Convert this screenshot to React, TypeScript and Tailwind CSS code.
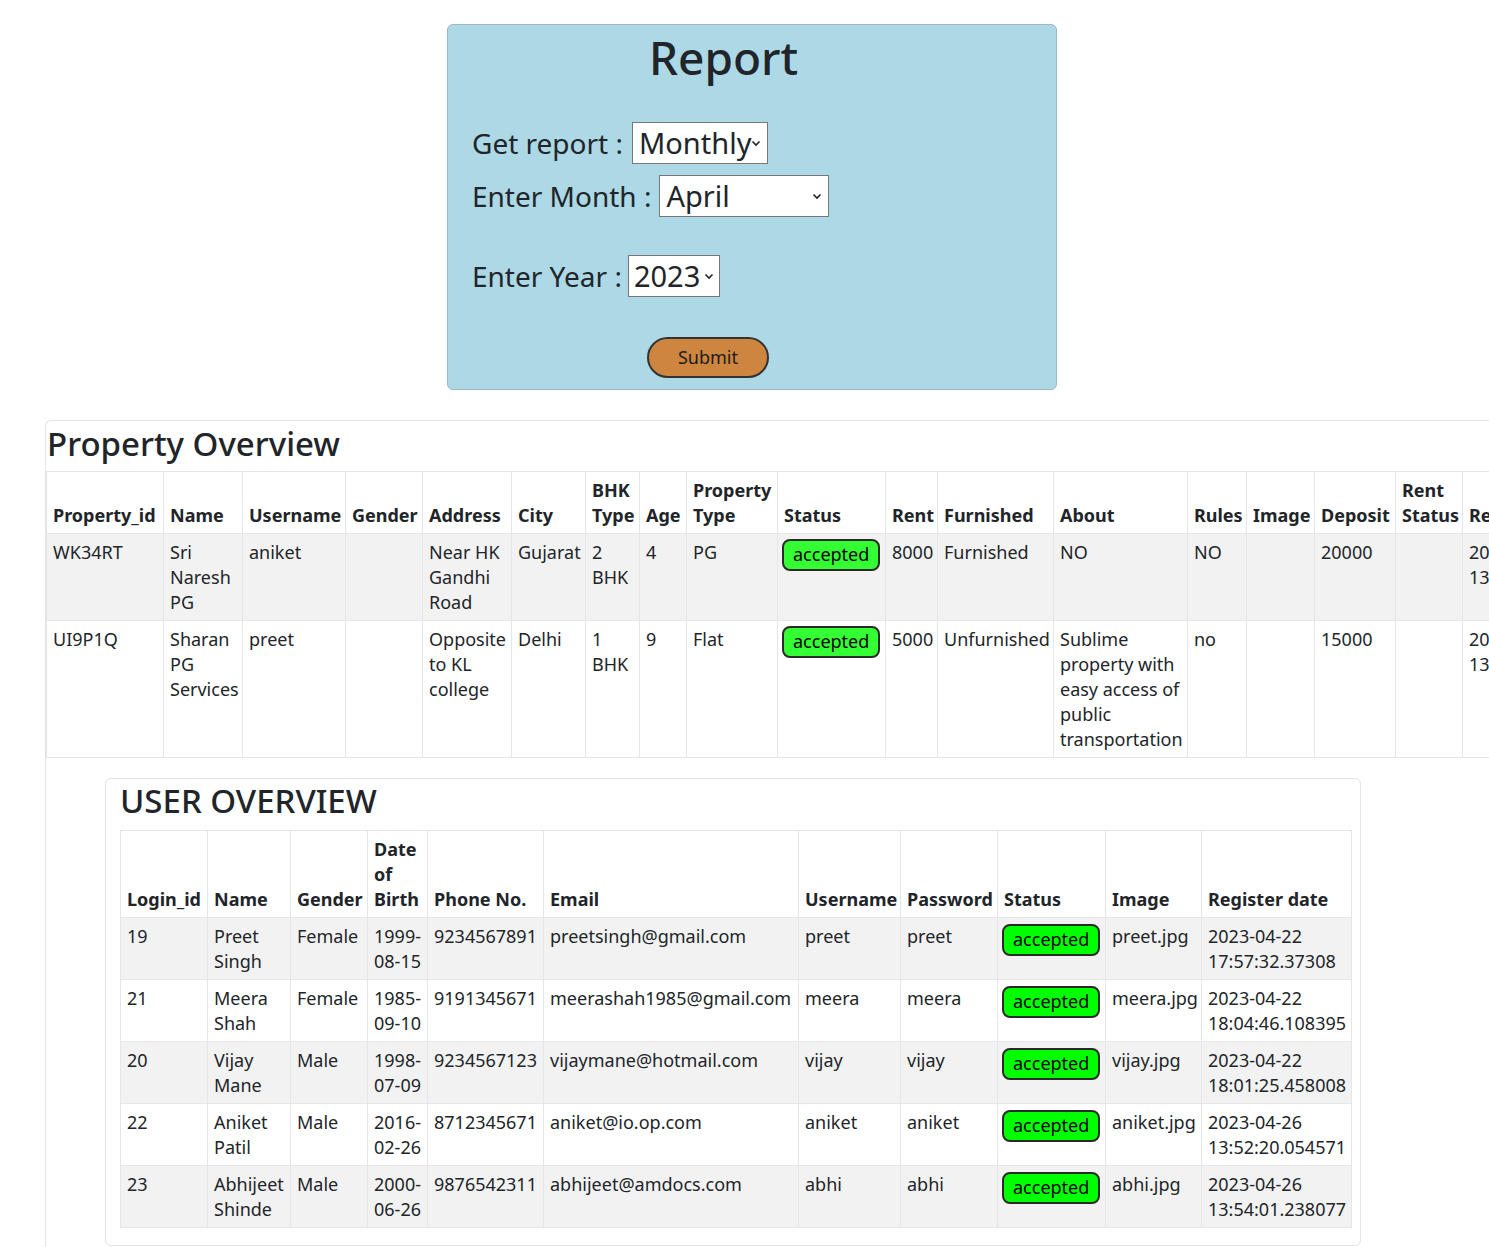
import React from "react";

const propHead = [
  { label: "Property_id", w: "w-[117px]" },
  { label: "Name", w: "w-[79px]" },
  { label: "Username", w: "w-[103px]" },
  { label: "Gender", w: "w-[77px]" },
  { label: "Address", w: "w-[89px]" },
  { label: "City", w: "w-[74px]" },
  { label: "BHK Type", w: "w-[54px]" },
  { label: "Age", w: "w-[47px]" },
  { label: "Property Type", w: "w-[91px]" },
  { label: "Status", w: "w-[108px]" },
  { label: "Rent", w: "w-[52px]" },
  { label: "Furnished", w: "w-[116px]" },
  { label: "About", w: "w-[134px]" },
  { label: "Rules", w: "w-[59px]" },
  { label: "Image", w: "w-[68px]" },
  { label: "Deposit", w: "w-[81px]" },
  { label: "Rent Status", w: "w-[67px]" },
  { label: "Register date", w: "w-[150px]" },
];

const properties = [
  ["WK34RT", "Sri Naresh PG", "aniket", "", "Near HK Gandhi Road", "Gujarat", "2 BHK", "4", "PG", "accepted", "8000", "Furnished", "NO", "NO", "", "20000", "", "2023-04-26 13:52:20.054571"],
  ["UI9P1Q", "Sharan PG Services", "preet", "", "Opposite to KL college", "Delhi", "1 BHK", "9", "Flat", "accepted", "5000", "Unfurnished", "Sublime property with easy access of public transportation", "no", "", "15000", "", "2023-04-26 13:54:01.238077"],
];

const userHead = [
  { label: "Login_id", w: "w-[87px]" },
  { label: "Name", w: "w-[83px]" },
  { label: "Gender", w: "w-[77px]" },
  { label: "Date of Birth", w: "w-[60px]" },
  { label: "Phone No.", w: "w-[116px]" },
  { label: "Email", w: "w-[255px]" },
  { label: "Username", w: "w-[102px]" },
  { label: "Password", w: "w-[97px]" },
  { label: "Status", w: "w-[108px]" },
  { label: "Image", w: "w-[96px]" },
  { label: "Register date", w: "w-[150px]" },
];

const users = [
  ["19", "Preet Singh", "Female", "1999-08-15", "9234567891", "preetsingh@gmail.com", "preet", "preet", "accepted", "preet.jpg", "2023-04-22 17:57:32.37308"],
  ["21", "Meera Shah", "Female", "1985-09-10", "9191345671", "meerashah1985@gmail.com", "meera", "meera", "accepted", "meera.jpg", "2023-04-22 18:04:46.108395"],
  ["20", "Vijay Mane", "Male", "1998-07-09", "9234567123", "vijaymane@hotmail.com", "vijay", "vijay", "accepted", "vijay.jpg", "2023-04-22 18:01:25.458008"],
  ["22", "Aniket Patil", "Male", "2016-02-26", "8712345671", "aniket@io.op.com", "aniket", "aniket", "accepted", "aniket.jpg", "2023-04-26 13:52:20.054571"],
  ["23", "Abhijeet Shinde", "Male", "2000-06-26", "9876542311", "abhijeet@amdocs.com", "abhi", "abhi", "accepted", "abhi.jpg", "2023-04-26 13:54:01.238077"],
];

function Badge({ color }: { color: string }) {
  return (
    <span className={`inline-block h-[32px] rounded-[8px] border-2 border-[#2a2a2a] px-[9px] text-[18px] leading-[27px] text-black ${color}`}>
      accepted
    </span>
  );
}

function Chevron() {
  return (
    <svg width="10" height="8" viewBox="0 0 10 8" className="shrink-0">
      <path d="M1.5 2.5 L5 6 L8.5 2.5" fill="none" stroke="#222" strokeWidth="1.6" />
    </svg>
  );
}

export default function App() {
  return (
    <div className="w-[1489px] h-[1247px] overflow-hidden bg-white font-['Noto_Sans',sans-serif] text-[#212529]">
      {/* report form */}
      <div className="pt-[24px] pl-[447px]">
        <div className="w-[610px] h-[366px] rounded-[6px] border border-[#9fb9c1] bg-[#add8e6]">
          <h1 className="pl-[201px] pt-[2px] text-[46px] leading-[60px] font-medium">Report</h1>
          <div className="pl-[24px] pt-[32px] flex flex-col text-[28px]">
            <div className="flex items-center h-[48px]">
              <span>Get report :</span>
              <div className="ml-[9px] flex items-center h-[42px] w-[136px] border border-[#777] bg-white pl-[6px] pr-[6px] text-[29px]">
                <span className="flex-1">Monthly</span>
                <Chevron />
              </div>
            </div>
            <div className="flex items-center h-[52px] mt-[3px]">
              <span>Enter Month :</span>
              <div className="ml-[8px] flex items-center h-[42px] w-[170px] border border-[#777] bg-white pl-[6px] pr-[6px] text-[29px]">
                <span className="flex-1">April</span>
                <Chevron />
              </div>
            </div>
            <div className="flex items-center h-[52px] mt-[28px]">
              <span>Enter Year :</span>
              <div className="ml-[6px] flex items-center h-[42px] w-[92px] border border-[#777] bg-white pl-[5px] pr-[5px] text-[29px]">
                <span className="flex-1">2023</span>
                <Chevron />
              </div>
            </div>
          </div>
          <div className="pl-[199px] pt-[35px]">
            <button className="h-[41px] w-[122px] rounded-full border-2 border-[#333] bg-[#cd853f] text-[18px] text-[#1c1c1c]">
              Submit
            </button>
          </div>
        </div>
      </div>

      {/* property overview */}
      <div className="mt-[30px] ml-[45px] w-[1700px] h-[900px] rounded-tl-[6px] border-l border-t border-[#e3e3e3]">
        <h2 className="pl-[1px] h-[50px] text-[33px] leading-[46px] font-medium">Property Overview</h2>
        <table className="w-[1566px] table-fixed border-collapse text-[18px] leading-[25px]">
          <thead>
            <tr>
              {propHead.map((h) => (
                <th key={h.label} className={`${h.w} border border-[#e3e6ea] px-[6px] pt-[6px] pb-[5px] text-left align-bottom font-bold`}>
                  {h.label}
                </th>
              ))}
            </tr>
          </thead>
          <tbody>
            {properties.map((row, i) => (
              <tr key={row[0]} className={i % 2 === 0 ? "bg-[#f2f2f2]" : "bg-white"}>
                {row.map((c, j) => (
                  <td key={j} className={`border border-[#e3e6ea] align-top ${j === 9 ? "px-[4px] pt-[5px] pb-[5px]" : "px-[6px] pt-[6px] pb-[5px]"}`}>
                    {j === 9 ? <Badge color="bg-[#33ff33]" /> : c}
                  </td>
                ))}
              </tr>
            ))}
          </tbody>
        </table>

        {/* user overview */}
        <div className="mt-[20px] ml-[59px] w-[1256px] h-[468px] rounded-[6px] border border-[#e3e3e3] pl-[14px] pr-[8px]">
          <h2 className="h-[51px] text-[33px] leading-[44px] font-medium">USER OVERVIEW</h2>
          <table className="w-[1231px] table-fixed border-collapse text-[18px] leading-[25px]">
            <thead>
              <tr>
                {userHead.map((h) => (
                  <th key={h.label} className={`${h.w} border border-[#e3e6ea] px-[6px] pt-[6px] pb-[5px] text-left align-bottom font-bold`}>
                    {h.label}
                  </th>
                ))}
              </tr>
            </thead>
            <tbody>
              {users.map((row, i) => (
                <tr key={row[0]} className={i % 2 === 0 ? "bg-[#f2f2f2]" : "bg-white"}>
                  {row.map((c, j) => (
                    <td key={j} className={`border border-[#e3e6ea] align-top ${j === 8 ? "px-[4px] pt-[6px] pb-[5px]" : "px-[6px] pt-[6px] pb-[5px]"}`}>
                      {j === 8 ? <Badge color="bg-[#00ff00]" /> : c}
                    </td>
                  ))}
                </tr>
              ))}
            </tbody>
          </table>
        </div>
      </div>
    </div>
  );
}
